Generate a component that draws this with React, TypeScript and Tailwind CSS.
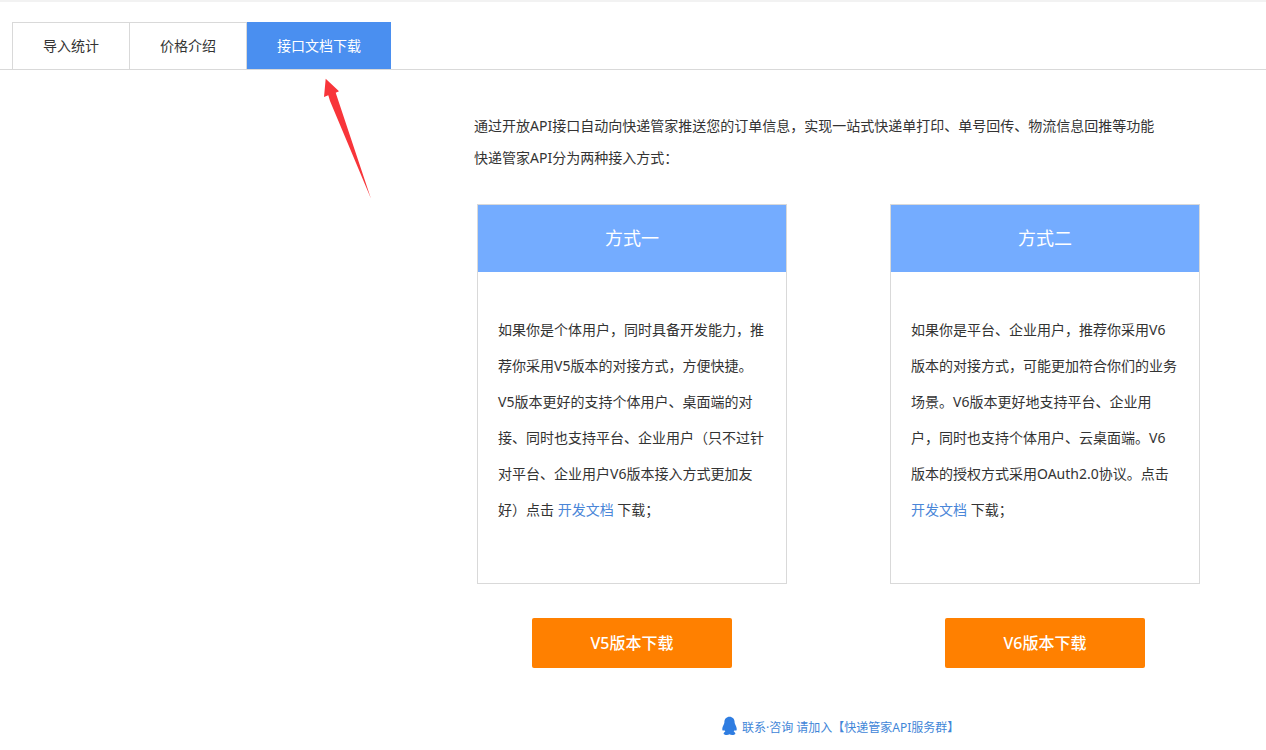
const font = "font-['Noto_Sans','Noto_Sans_CJK_SC',sans-serif]";

function DocLink() {
  return <a className="text-[#4a86d8]">开发文档</a>;
}

function MethodCard({ title, children }: { title: string; children: React.ReactNode }) {
  return (
    <div className="w-[310px] h-[380px] border border-[#d9d9d9] bg-white">
      <div className="h-[67px] pb-0.5 bg-[#74acff] text-white text-lg flex items-center justify-center">{title}</div>
      <div className="px-5 pt-10 text-sm leading-9 text-[#333]">{children}</div>
    </div>
  );
}

function DownloadButton({ label }: { label: string }) {
  return (
    <button className="w-[200px] h-[50px] rounded-[2px] bg-[#ff8000] text-white text-base font-medium">{label}</button>
  );
}

function QQIcon() {
  return (
    <svg viewBox="0 0 20 22" className="w-[17px] h-[20px] mb-[3px]" fill="#2f7de1">
      <path d="M10 0c-3.6 0-6 2.7-6 6.2 0 .9-.1 1.5-.5 2.3C2.600 10.300 1.500 12.200 1.500 14.600c0 1.300.4 2 .9 2 .5 0 1-.6 1.300-1.300.3 1 .8 1.900 1.500 2.600-1.200.4-2.100 1.100-2.100 2 0 1.100 1.600 1.800 3.700 1.800 1.300 0 2.500-.4 3.200-1 .7.600 1.900 1 3.200 1 2.100 0 3.700-.7 3.700-1.800 0-.9-.9-1.600-2.100-2 .7-.7 1.200-1.600 1.500-2.600.3.700.8 1.300 1.300 1.300s.9-.7.900-2c0-2.400-1.100-4.300-2-6.100-.4-.8-.5-1.400-.5-2.300C16 2.700 13.600 0 10 0z" />
    </svg>
  );
}

function Arrow() {
  return (
    <svg viewBox="0 0 60 130" className="absolute left-[320px] top-[76px] w-[60px] h-[130px]">
      <path d="M5.700 2.700 L19 15.300 L15.700 16.700 L51 122.700 L10 25 L8.300 19.300 L4 21 Z" fill="#f8353a" />
    </svg>
  );
}

export default function App() {
  return (
    <div className={`${font} relative w-[1266px] h-[750px] overflow-hidden bg-white text-[#333]`}>
      <div className="h-0.5 bg-[#f2f2f2]" />

      <div className="mt-5 pl-3 border-b border-[#d9d9d9] flex h-[48px] text-sm">
        <div className="w-[118px] border border-b-0 border-[#d9d9d9] flex items-center justify-center">导入统计</div>
        <div className="w-[117px] border-t border-r border-[#d9d9d9] flex items-center justify-center">价格介绍</div>
        <div className="w-[144px] bg-[#4a8ff0] text-white flex items-center justify-center">接口文档下载</div>
      </div>
      <Arrow />

      <div className="pl-[474px] pt-10 text-sm leading-8">
        <p>通过开放API接口自动向快递管家推送您的订单信息，实现一站式快递单打印、单号回传、物流信息回推等功能</p>
        <p>快递管家API分为两种接入方式：</p>
      </div>

      <div className="pl-[477px] mt-[30px] flex gap-[103px]">
        <MethodCard title="方式一">
          如果你是个体用户，同时具备开发能力，推<br />
          荐你采用V5版本的对接方式，方便快捷。<br />
          V5版本更好的支持个体用户、桌面端的对<br />
          接、同时也支持平台、企业用户（只不过针<br />
          对平台、企业用户V6版本接入方式更加友<br />
          好）点击 <DocLink /> 下载；
        </MethodCard>
        <MethodCard title="方式二">
          如果你是平台、企业用户，推荐你采用V6<br />
          版本的对接方式，可能更加符合你们的业务<br />
          场景。V6版本更好地支持平台、企业用<br />
          户，同时也支持个体用户、云桌面端。V6<br />
          版本的授权方式采用OAuth2.0协议。点击<br />
          <DocLink /> 下载；
        </MethodCard>
      </div>

      <div className="pl-[532px] mt-[34px] flex gap-[213px]">
        <DownloadButton label="V5版本下载" />
        <DownloadButton label="V6版本下载" />
      </div>

      <div className="pl-[721px] mt-[48px] flex items-center gap-1 text-xs text-[#3f86d8]">
        <QQIcon />
        <span>联系·咨询 请加入【快递管家API服务群】</span>
      </div>
    </div>
  );
}
